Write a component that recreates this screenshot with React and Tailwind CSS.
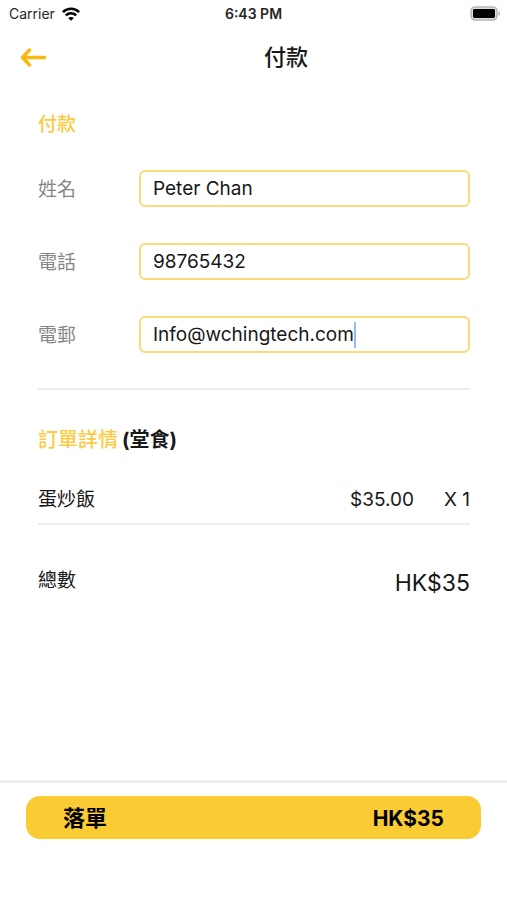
import React, { useState } from "react";

const fields = [
  { id: "name", label: "姓名", type: "text", value: "Peter Chan" },
  { id: "phone", label: "電話", type: "tel", value: "98765432" },
  { id: "email", label: "電郵", type: "text", value: "Info@wchingtech.com" },
];

const StatusBar = () => (
  <div className="grid h-[27px] grid-cols-3 items-center px-[6px] text-[14px] text-neutral-800">
    <div className="flex items-center gap-[7px] pl-[3px]">
      <span>Carrier</span>
      <svg width="18" height="14" viewBox="0 0 18 14" fill="none" stroke="#000" strokeWidth="2.6" aria-hidden="true">
        <path d="M0.9 5.1C5.4 0.7 12.6 0.7 17.1 5.1" />
        <path d="M3.8 8.4C6.8 5.6 11.2 5.6 14.2 8.4" />
        <path d="M9 13.8L6.1 11C7.7 9.6 10.3 9.6 11.9 11Z" fill="#000" stroke="none" />
      </svg>
    </div>
    <span className="text-center font-semibold">6:43 PM</span>
    <svg className="justify-self-end" width="31" height="15" viewBox="0 0 31 15" aria-hidden="true">
      <rect x="1" y="1" width="26" height="13" rx="4" fill="#ddd" stroke="#b8b8b8" strokeWidth="1.6" />
      <rect x="3" y="3" width="22" height="9" rx="1.4" fill="#000" />
      <path d="M28.6 5.2C30.8 6 30.8 9 28.6 9.8Z" fill="#b5b5b5" />
    </svg>
  </div>
);

const Header = () => (
  <header className="flex h-[59px] items-center px-5">
    <button type="button" aria-label="返回" className="w-[65px] shrink-0 cursor-pointer">
      <svg width="27" height="20" viewBox="0 0 27 20" fill="none" stroke="#fbb811" strokeWidth="3.4" strokeLinecap="round" strokeLinejoin="round">
        <path d="M2.5 10.5H24.5" />
        <path d="M9.5 3L2.5 10.5L9.5 18" />
      </svg>
    </button>
    <h1 className="flex-1 text-center text-[22px] font-medium leading-8">付款</h1>
  </header>
);

const Field = ({ field, value, onChange, active }) => (
  <div className="flex items-center">
    <label htmlFor={field.id} className="w-[101px] shrink-0 pt-[3px] text-[19px] text-[#868686]">
      {field.label}
    </label>
    <div className="flex h-[37px] min-w-0 flex-1 items-center rounded-[6px] border-2 border-[#fadb78] px-3">
      <input
        id={field.id}
        type={field.type}
        value={value}
        onChange={(e) => onChange(field.id, e.target.value)}
        className={`min-w-0 bg-transparent text-[19px] leading-6 outline-none ${
          active ? "field-sizing-content" : "w-full"
        }`}
      />
      {active && <span className="h-[26px] w-[2px] shrink-0 bg-[#9db4f5]" />}
    </div>
  </div>
);

const App = () => {
  const [values, setValues] = useState({
    name: fields[0].value,
    phone: fields[1].value,
    email: fields[2].value,
  });

  const handleChange = (id, value) => {
    setValues((prev) => ({ ...prev, [id]: value }));
  };

  return (
    <div className="flex min-h-screen flex-col bg-white font-['Inter','Noto_Sans_CJK_TC',sans-serif] text-neutral-900">
      <StatusBar />
      <Header />

      <main className="flex-1 pl-[38px] pr-[37px] pt-[25px]">
        {/* Customer details */}
        <h2 className="text-[19px] font-medium leading-7 text-[#fbcb42]">付款</h2>
        <form className="mt-[31px] flex flex-col gap-9">
          {fields.map((field) => (
            <Field
              key={field.id}
              field={field}
              value={values[field.id]}
              onChange={handleChange}
              active={field.id === "email"}
            />
          ))}
        </form>

        <hr className="mt-[35px] border-t-2 border-[#ececec]" />

        {/* Order details */}
        <h2 className="mt-9 flex gap-1 text-[20px] font-medium leading-7">
          <span className="text-[#fbcb42]">訂單詳情</span>
          <span className="font-bold">(堂食)</span>
        </h2>
        <div className="mt-8 flex items-center border-b-2 border-[#ececec] pb-[9px] text-[19px] leading-7">
          <span className="flex-1">蛋炒飯</span>
          <span>$35.00</span>
          <span className="ml-[30px]">X 1</span>
        </div>
        <div className="mt-[42px] flex items-start justify-between">
          <span className="text-[19px] leading-7">總數</span>
          <span className="text-[23px] leading-8">HK$35</span>
        </div>
      </main>

      <footer className="h-[120px] border-t-3 border-[#eeeeee] px-[26px] pt-[13px]">
        <button
          type="button"
          className="flex h-[43px] w-full cursor-pointer items-center justify-between rounded-[14px] bg-[#fbcb33] px-[37px] font-bold leading-7 text-black"
        >
          <span className="text-[22px]">落單</span>
          <span className="pt-[3px] text-[21px]">HK$35</span>
        </button>
      </footer>
    </div>
  );
};

export default App;
